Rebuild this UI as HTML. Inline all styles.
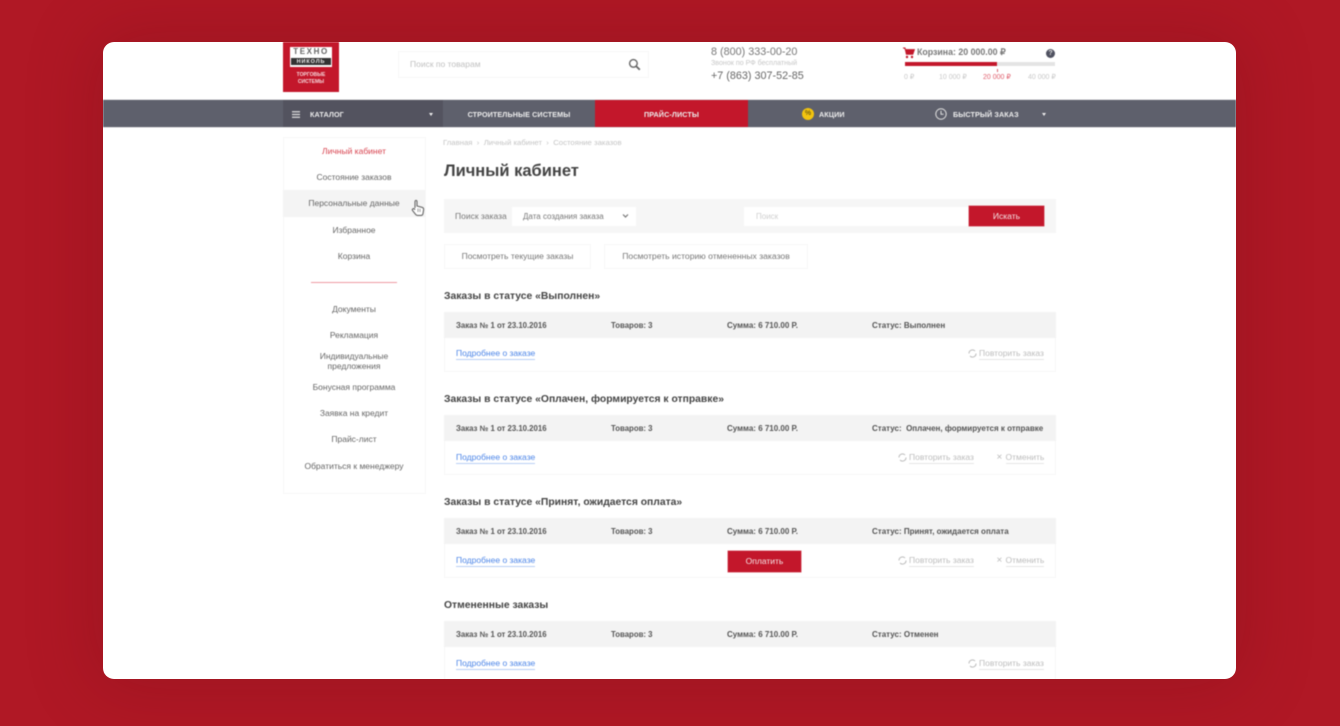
<!DOCTYPE html>
<html lang="ru"><head><meta charset="utf-8"><title>Личный кабинет</title>
<style>
html,body{margin:0;padding:0;width:1340px;height:726px;overflow:hidden;background:#b01825}
body{position:relative;font-family:"Liberation Sans",sans-serif;color:#555}
.glow{position:absolute;left:103px;top:42px;width:1133px;height:637px;border-radius:11px;box-shadow:0 0 70px 10px rgba(90,10,20,.2)}
.card{position:absolute;left:103px;top:42px;width:1133px;height:637px;border-radius:11px;background:#fff;overflow:hidden}
.in{position:absolute;left:-103px;top:-42px;width:1340px;height:726px;filter:blur(.65px)}
.a{position:absolute;white-space:nowrap}
.t{position:absolute;white-space:nowrap;line-height:14px;height:14px}
.c{text-align:center}
.m{font-size:8.5px;color:#666;left:283px;width:142px;text-align:center}
.h{font-size:10.35px;font-weight:bold;color:#444;left:444px}
.r{font-size:7.8px;font-weight:bold;color:#555}
.s{font-size:8px}
.l{font-size:8.5px;color:#4d86e8;left:456px;border-bottom:1px solid #b9cff5;line-height:11px;height:11px}
.g{font-size:8.5px;color:#bdbdbd;border-bottom:1px solid #e6e6e6;line-height:11px;height:11px}
.w{font-size:7.2px;font-weight:bold;color:#eee;letter-spacing:.1px}
.btn{position:absolute;background:#c3172b;color:#f4e4e6;font-size:8.5px;text-align:center;box-shadow:0 0 0 .5px #d9626f}
.box{position:absolute;border:1px solid #f7f7f7;box-sizing:border-box;background:#fff}
</style></head><body>
<div class="glow"></div>
<div class="card"><div class="in">

<!-- logo -->
<div class="a" style="left:283px;top:42px;width:56px;height:50px;background:#c3172b"></div>
<div class="a" style="left:290px;top:47px;width:42px;height:20px;background:#fff"></div>
<div class="t" style="left:290px;top:45px;width:42px;text-align:center;font:bold 8px/14px 'Liberation Sans',sans-serif;color:#666;letter-spacing:1.6px">ТЕХНО</div>
<div class="a" style="left:291px;top:58px;width:40px;height:7px;background:#333"></div>
<div class="t" style="left:291px;top:54.5px;width:40px;text-align:center;font-size:5.5px;font-weight:bold;color:#eee;letter-spacing:.9px">НИКОЛЬ</div>
<div class="t" style="left:283px;top:72px;width:56px;text-align:center;font-size:5px;font-weight:bold;color:#f6d9dc;line-height:6.5px;height:14px;white-space:normal">ТОРГОВЫЕ<br>СИСТЕМЫ</div>

<!-- header search -->
<div class="box" style="left:398px;top:51px;width:251px;height:27px"></div>
<div class="t" style="left:410px;top:57px;font-size:8.5px;color:#c0c0c0">Поиск по товарам</div>
<svg class="a" style="left:628px;top:58px" width="13" height="13" viewBox="0 0 13 13"><circle cx="5.4" cy="5.4" r="3.8" fill="none" stroke="#666" stroke-width="1.4"/><path d="M8.2 8.2L11.8 11.8" stroke="#666" stroke-width="1.8"/></svg>

<!-- phones -->
<div class="t" style="left:711px;top:45px;font-size:10.8px;color:#777">8 (800) 333-00-20</div>
<div class="t" style="left:711px;top:55.5px;font-size:7.1px;color:#c6c6c6">Звонок по РФ бесплатный</div>
<div class="t" style="left:711px;top:69px;font-size:10.8px;color:#666">+7 (863) 307-52-85</div>

<!-- cart -->
<svg class="a" style="left:903px;top:47px" width="12" height="12" viewBox="0 0 12 12"><path d="M0 1h2l1.4 6.2h6.4L11.4 2.6H2.6" fill="#c3172b" stroke="#c3172b" stroke-width="1"/><circle cx="4" cy="10" r="1.2" fill="#c3172b"/><circle cx="9" cy="10" r="1.2" fill="#c3172b"/></svg>
<div class="t" style="left:917px;top:45px;font-size:8.8px;font-weight:bold;color:#777">Корзина: 20 000.00 ₽</div>
<div class="a" style="left:1046px;top:49px;width:9px;height:9px;border-radius:50%;background:#4f5160;color:#ddd;font-size:7px;line-height:9px;text-align:center;font-weight:bold">?</div>
<div class="a" style="left:905px;top:62px;width:150px;height:3.5px;background:#e4e4e4"></div>
<div class="a" style="left:905px;top:62px;width:92px;height:3.5px;background:#c3172b"></div>
<div class="a" style="left:997px;top:69px;width:1px;height:3px;background:#d8616d"></div>
<div class="t" style="left:904px;top:71px;font-size:7px;color:#c8c8c8">0 ₽</div>
<div class="t" style="left:939px;top:71px;font-size:7px;color:#c8c8c8">10 000 ₽</div>
<div class="t" style="left:983px;top:71px;font-size:7px;color:#e0606e">20 000 ₽</div>
<div class="t" style="left:1028px;top:71px;font-size:7px;color:#c8c8c8">40 000 ₽</div>

<!-- nav -->
<div class="a" style="left:103px;top:100px;width:1133px;height:27px;background:#5e606c;box-shadow:0 -.5px 0 #c9c9ce,0 .5px 0 #c9c9ce"></div>
<div class="a" style="left:283px;top:100px;width:160px;height:27px;background:#53535f"></div>
<div class="a" style="left:595px;top:100px;width:153px;height:27px;background:#c3172b"></div>
<svg class="a" style="left:292px;top:111px" width="8" height="7" viewBox="0 0 8 7"><path d="M0 .75h8M0 3.5h8M0 6.25h8" stroke="#ddd" stroke-width="1.3"/></svg>
<div class="t w" style="left:310px;top:108px">КАТАЛОГ</div>
<div class="a" style="left:429px;top:112.5px;width:0;height:0;border-left:2.5px solid transparent;border-right:2.5px solid transparent;border-top:3px solid #eee"></div>
<div class="t w" style="left:443px;width:152px;text-align:center;top:108px">СТРОИТЕЛЬНЫЕ СИСТЕМЫ</div>
<div class="t w" style="left:595px;width:153px;text-align:center;top:108px">ПРАЙС-ЛИСТЫ</div>
<div class="a" style="left:802px;top:108px;width:12px;height:12px;border-radius:50%;background:#f2c40f;color:#7a6510;font-size:7px;line-height:12px;text-align:center;font-weight:bold">%</div>
<div class="t w" style="left:819px;top:108px">АКЦИИ</div>
<svg class="a" style="left:935px;top:108px" width="12" height="12" viewBox="0 0 12 12"><circle cx="6" cy="6" r="5.2" fill="none" stroke="#ddd" stroke-width="1"/><path d="M6 2.8V6.2H8.6" fill="none" stroke="#ddd" stroke-width="1"/></svg>
<div class="t w" style="left:953px;top:108px">БЫСТРЫЙ ЗАКАЗ</div>
<div class="a" style="left:1041.5px;top:112.5px;width:0;height:0;border-left:2.5px solid transparent;border-right:2.5px solid transparent;border-top:3px solid #eee"></div>

<!-- sidebar -->
<div class="box" style="left:283px;top:137px;width:143px;height:357px"></div>
<div class="a" style="left:283px;top:190px;width:142px;height:27px;background:#f4f4f4"></div>
<div class="t m" style="top:144px;color:#d8434f">Личный кабинет</div>
<div class="t m" style="top:170px">Состояние заказов</div>
<div class="t m" style="top:196px">Персональные данные</div>
<div class="t m" style="top:223px">Избранное</div>
<div class="t m" style="top:249px">Корзина</div>
<div class="a" style="left:311px;top:282px;width:86px;height:1px;background:#ee9aa2"></div>
<div class="t m" style="top:302px">Документы</div>
<div class="t m" style="top:328px">Рекламация</div>
<div class="t m" style="top:351px;line-height:10px;height:20px;white-space:normal">Индивидуальные<br>предложения</div>
<div class="t m" style="top:380px">Бонусная программа</div>
<div class="t m" style="top:406px">Заявка на кредит</div>
<div class="t m" style="top:432px">Прайс-лист</div>
<div class="t m" style="top:459px">Обратиться к менеджеру</div>
<svg class="a" style="left:411px;top:199px" width="14" height="18" viewBox="0 0 14 18"><path d="M4 9V2.6C4 1 6 1 6 2.6V7l5 1.3c1.4.4 1.8 1.2 1.6 2.6l-.6 3.6c-.2 1.2-.9 1.9-2 1.9H6.4c-.8 0-1.3-.4-1.8-1L1.6 11.6C.7 10.3 2.4 9 3.4 10L4 10.8" fill="#fff" stroke="#666" stroke-width="1.1"/><path d="M7 9.5V13M9 9.8V13" stroke="#888" stroke-width=".8"/></svg>

<!-- breadcrumbs + title -->
<div class="t" style="left:443px;top:135.5px;font-size:7.75px;color:#c4c4c4">Главная &nbsp;› &nbsp;Личный кабинет &nbsp;› &nbsp;Состояние заказов</div>
<div class="t" style="left:444px;top:161px;height:20px;line-height:20px;font-size:16.5px;font-weight:bold;color:#444">Личный кабинет</div>

<!-- search panel -->
<div class="a" style="left:444px;top:199px;width:612px;height:34px;background:#f6f6f6"></div>
<div class="t" style="left:455px;top:209px;font-size:8.5px;color:#777">Поиск заказа</div>
<div class="a" style="left:512px;top:207px;width:124px;height:19px;background:#fff"></div>
<div class="t" style="left:523px;top:210px;font-size:8px;color:#777">Дата создания заказа</div>
<svg class="a" style="left:622px;top:213px" width="7" height="6" viewBox="0 0 7 6"><path d="M1 1.5L3.5 4L6 1.5" fill="none" stroke="#777" stroke-width="1.2"/></svg>
<div class="a" style="left:744px;top:207px;width:226px;height:19px;background:#fff"></div>
<div class="t" style="left:756px;top:210px;font-size:8px;color:#cfcfcf">Поиск</div>
<div class="btn" style="left:969px;top:206px;width:75px;height:20px;line-height:20px">Искать</div>

<!-- filter buttons -->
<div class="box c" style="left:444px;top:244px;width:147px;height:25px;line-height:23px;font-size:8.5px;color:#777">Посмотреть текущие заказы</div>
<div class="box c" style="left:604px;top:244px;width:204px;height:25px;line-height:23px;font-size:8.6px;color:#777">Посмотреть историю отмененных заказов</div>

<!-- section 1 -->
<div class="t h" style="top:290px">Заказы в статусе «Выполнен»</div>
<div class="box" style="left:444px;top:312px;width:612px;height:60px"></div>
<div class="a" style="left:444px;top:312px;width:612px;height:26px;background:#f3f3f3"></div>
<div class="t r" style="left:456px;top:319px">Заказ № 1 от 23.10.2016</div>
<div class="t r" style="left:611px;top:319px">Товаров: 3</div>
<div class="t r s" style="left:727px;top:319px">Сумма: 6 710.00 Р.</div>
<div class="t r s" style="left:872px;top:319px">Статус: Выполнен</div>
<div class="t l" style="top:348px">Подробнее о заказе</div>
<svg class="a" style="left:968px;top:349px" width="9" height="9" viewBox="0 0 9 9"><path d="M1 4.5A3.5 3.5 0 0 1 7 2M8 4.5A3.5 3.5 0 0 1 2 7" fill="none" stroke="#bbb" stroke-width="1"/></svg>
<div class="t g" style="left:979px;top:348px">Повторить заказ</div>

<!-- section 2 -->
<div class="t h" style="top:393px">Заказы в статусе «Оплачен, формируется к отправке»</div>
<div class="box" style="left:444px;top:415px;width:612px;height:60px"></div>
<div class="a" style="left:444px;top:415px;width:612px;height:26px;background:#f3f3f3"></div>
<div class="t r" style="left:456px;top:422px">Заказ № 1 от 23.10.2016</div>
<div class="t r" style="left:611px;top:422px">Товаров: 3</div>
<div class="t r s" style="left:727px;top:422px">Сумма: 6 710.00 Р.</div>
<div class="t r s" style="left:872px;top:422px">Статус: &nbsp;Оплачен, формируется к отправке</div>
<div class="t l" style="top:452px">Подробнее о заказе</div>
<svg class="a" style="left:898px;top:453px" width="9" height="9" viewBox="0 0 9 9"><path d="M1 4.5A3.5 3.5 0 0 1 7 2M8 4.5A3.5 3.5 0 0 1 2 7" fill="none" stroke="#bbb" stroke-width="1"/></svg>
<div class="t g" style="left:909px;top:452px">Повторить заказ</div>
<div class="t" style="left:996.5px;top:451px;font-size:10px;color:#bbb">×</div>
<div class="t g" style="left:1005.5px;top:452px">Отменить</div>

<!-- section 3 -->
<div class="t h" style="top:496px">Заказы в статусе «Принят, ожидается оплата»</div>
<div class="box" style="left:444px;top:518px;width:612px;height:60px"></div>
<div class="a" style="left:444px;top:518px;width:612px;height:26px;background:#f3f3f3"></div>
<div class="t r" style="left:456px;top:525px">Заказ № 1 от 23.10.2016</div>
<div class="t r" style="left:611px;top:525px">Товаров: 3</div>
<div class="t r s" style="left:727px;top:525px">Сумма: 6 710.00 Р.</div>
<div class="t r s" style="left:872px;top:525px">Статус: Принят, ожидается оплата</div>
<div class="t l" style="top:555px">Подробнее о заказе</div>
<div class="btn" style="left:728px;top:551px;width:73px;height:21px;line-height:21px">Оплатить</div>
<svg class="a" style="left:898px;top:556px" width="9" height="9" viewBox="0 0 9 9"><path d="M1 4.5A3.5 3.5 0 0 1 7 2M8 4.5A3.5 3.5 0 0 1 2 7" fill="none" stroke="#bbb" stroke-width="1"/></svg>
<div class="t g" style="left:909px;top:555px">Повторить заказ</div>
<div class="t" style="left:996.5px;top:554px;font-size:10px;color:#bbb">×</div>
<div class="t g" style="left:1005.5px;top:555px">Отменить</div>

<!-- section 4 -->
<div class="t h" style="top:599px">Отмененные заказы</div>
<div class="box" style="left:444px;top:621px;width:612px;height:70px"></div>
<div class="a" style="left:444px;top:621px;width:612px;height:26px;background:#f3f3f3"></div>
<div class="t r" style="left:456px;top:628px">Заказ № 1 от 23.10.2016</div>
<div class="t r" style="left:611px;top:628px">Товаров: 3</div>
<div class="t r s" style="left:727px;top:628px">Сумма: 6 710.00 Р.</div>
<div class="t r s" style="left:872px;top:628px">Статус: Отменен</div>
<div class="t l" style="top:658px">Подробнее о заказе</div>
<svg class="a" style="left:968px;top:659px" width="9" height="9" viewBox="0 0 9 9"><path d="M1 4.5A3.5 3.5 0 0 1 7 2M8 4.5A3.5 3.5 0 0 1 2 7" fill="none" stroke="#bbb" stroke-width="1"/></svg>
<div class="t g" style="left:979px;top:658px">Повторить заказ</div>

</div></div>
</body></html>
